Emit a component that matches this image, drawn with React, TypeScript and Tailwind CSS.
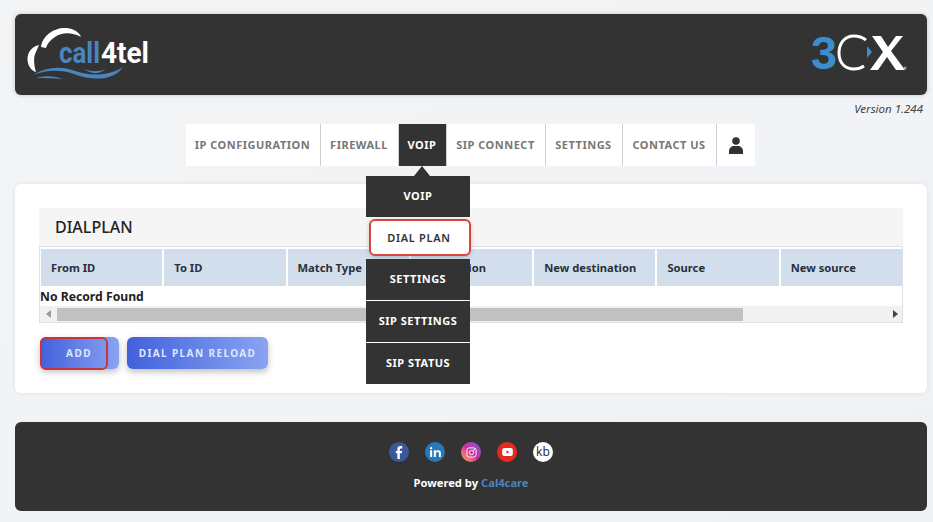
const font = { fontFamily: '"Noto Sans", "Open Sans", sans-serif' }

const navItems = [
  { label: "IP CONFIGURATION", width: "w-[135px]" },
  { label: "FIREWALL", width: "w-[78px]" },
  { label: "VOIP", width: "w-[48px]", active: true },
  { label: "SIP CONNECT", width: "w-[99px]" },
  { label: "SETTINGS", width: "w-[77px]" },
  { label: "CONTACT US", width: "w-[94px]" },
]

const columns = ["From ID", "To ID", "Match Type", "Destination", "New destination", "Source", "New source"]

function Call4telLogo() {
  return (
    <svg width="126" height="56" viewBox="0 0 126 56" fill="none">
      {/* cloud */}
      <path d="M15 20C17 6 34 -3 48 3C52 5 54 7 55 10C46 5 36 5 29 10C24 13 21 17 20 21Z" fill="#fff" />
      <path d="M13 18C4 20 0 28 2 36C3 40 6 44 10 45C8 38 7 30 10 25C11 23 12 20 13 18Z" fill="#fff" />
      {/* waves */}
      <path d="M7 48C20 40 33 39 46 43C60 48 80 51 97 40C88 54 66 54 48 47C34 42 20 43 7 48Z" fill="#4a86bd" />
      <path d="M58 42C66 45 72 45 80 42C72 48 65 47 58 42Z" fill="#4a86bd" />
      <path d="M10 51C20 48 30 49 37 52C28 51 20 51 10 51Z" fill="#4a86bd" />
      <text x="33" y="36" fontFamily="Roboto, sans-serif" fontWeight="700" fontSize="29" fill="#4a86bd" textLength="41" lengthAdjust="spacingAndGlyphs">call</text>
      <text x="75" y="36" fontFamily="Roboto, sans-serif" fontWeight="700" fontSize="29" fill="#fff" textLength="48" lengthAdjust="spacingAndGlyphs">4tel</text>
    </svg>
  )
}

function ThreeCxLogo() {
  return (
    <svg className="mb-1" width="98" height="56" viewBox="0 -10 98 56" fill="none">
      <text x="0" y="34" fontFamily="Liberation Sans, sans-serif" fontWeight="700" fontSize="47" fill="#3b8fd0" textLength="26" lengthAdjust="spacingAndGlyphs">3</text>
      <path d="M55 5C51 2 47 1 43 1C33 1 28 9 28 18C28 28 34 34 43 34C47 34 50 33 53 31" stroke="#fff" strokeWidth="3" />
      <path d="M56 11L61 17L56 23Z" fill="#3b8fd0" />
      <path d="M61 1H70L77 12L85 1H92L80 16L94 35H85L76 22L67 35H59L72 17Z" fill="#fff" />
      <circle cx="94" cy="33" r="1.500" fill="#9aa5ad" />
    </svg>
  )
}

function SocialIcons() {
  return (
    <div className="flex items-center gap-4">
      <div className="flex h-5 w-5 items-center justify-center rounded-full bg-[#3b5998]">
        <svg width="8" height="15" viewBox="0 0 10 16"><path d="M3 16V9H1V6h2V4c0-2.500 1.500-4 3.500-4H9v3H7.500C6.500 3 6 3.500 6 4.500V6h3L8.500 9H6v7Z" fill="#fff" /></svg>
      </div>
      <div className="flex h-5 w-5 items-center justify-center rounded-full bg-[#2a78b8]">
        <svg width="11" height="10" viewBox="0 0 13 12"><path d="M0 4h2.500v8H0ZM1.250 0a1.400 1.400 0 1 1 0 2.800 1.400 1.400 0 0 1 0-2.800ZM4.500 4H7v1.200C7.500 4.400 8.500 3.800 9.700 3.800 12 3.800 13 5.200 13 7.500V12h-2.500V8c0-1.200-.4-2-1.500-2S7 6.800 7 8v4H4.500Z" fill="#fff" /></svg>
      </div>
      <div className="flex h-5 w-5 items-center justify-center rounded-full bg-gradient-to-tr from-[#f9a825] via-[#d6249f] to-[#5b51d8]">
        <svg width="11" height="11" viewBox="0 0 12 12" fill="none" stroke="#fff"><rect x="1" y="1" width="10" height="10" rx="2.500" /><circle cx="6" cy="6" r="2.300" /><circle cx="8.800" cy="3.200" r=".4" fill="#fff" /></svg>
      </div>
      <div className="flex h-5 w-5 items-center justify-center rounded-full bg-[#e62b1e]">
        <svg width="11" height="8" viewBox="0 0 12 9"><rect width="12" height="9" rx="2.500" fill="#fff" /><path d="M4.800 2.500 8 4.500 4.800 6.500Z" fill="#e62b1e" /></svg>
      </div>
      <div className="flex h-5 w-5 items-center justify-center rounded-full bg-white text-[12px] leading-none text-[#333]">kb</div>
    </div>
  )
}

function DropdownItem({ label }: { label: string }) {
  return (
    <div className="flex h-[41px] w-[104px] items-center justify-center bg-[#333333] text-[11px] font-bold tracking-[0.5px] text-white">
      {label}
    </div>
  )
}

export default function App() {
  return (
    <div className="h-[522px] w-[933px] overflow-hidden bg-gradient-to-br from-[#f3f4f5] to-[#eff2f5] pl-[15px] pr-[6px] pt-[14px]" style={font}>
      <header className="flex h-[81px] items-center justify-between rounded-md bg-[#333333] pl-[11px] pr-[18px] shadow-[0_0_4px_rgba(0,0,0,0.2)]">
        <Call4telLogo />
        <ThreeCxLogo />
      </header>

      <p className="mt-[6px] h-[16px] pr-1 text-right text-[11.5px] italic leading-4 text-[#444]">Version 1.244</p>

      <nav className="relative z-10 mt-[7px] flex h-[42px] justify-center pr-[2px]">
        <div className="flex">
          {navItems.map((item) => (
            <div
              key={item.label}
              className={`relative flex h-[42px] items-center justify-center border-r border-[#cfcfcf] text-[11px] font-bold tracking-[0.5px] ${item.width} ${item.active ? "bg-[#333333] text-white" : "bg-white text-[#777]"}`}
            >
              {item.label}
              {item.active && (
                <span className="absolute -bottom-[10px] left-1/2 h-0 w-0 -translate-x-1/2 border-x-[8px] border-b-[10px] border-x-transparent border-b-[#333333]" />
              )}
            </div>
          ))}
          <div className="flex h-[42px] w-[38px] items-center justify-center bg-white">
            <svg width="14" height="17" viewBox="0 0 14 17" fill="#333"><circle cx="7" cy="4" r="3.800" /><path d="M0 17v-3c0-3 2.500-5 5-5h4c2.500 0 5 2 5 5v3Z" /></svg>
          </div>
        </div>

        {/* dropdown */}
        <div className="absolute left-[351px] top-[52px] flex flex-col">
          <DropdownItem label="VOIP" />
          <div className="relative my-[1px] h-[40px] w-[104px]">
            <div className="absolute left-[3px] top-[1px] flex h-[37px] w-[102px] items-center justify-center rounded-md border-2 border-[#d9453d] bg-white pr-[2px] pt-px text-[11px] font-semibold tracking-[0.7px] text-[#333] shadow-[0_1px_4px_rgba(0,0,0,0.2)]">
              DIAL PLAN
            </div>
          </div>
          <div className="flex flex-col gap-px">
            <DropdownItem label="SETTINGS" />
            <DropdownItem label="SIP SETTINGS" />
            <DropdownItem label="SIP STATUS" />
          </div>
        </div>
      </nav>

      <main className="mt-[18px] h-[209px] rounded-md bg-white px-6 pt-6 shadow-[0_0_4px_rgba(0,0,0,0.08)]">
        <h2 className="flex h-[38px] items-center bg-[#f5f5f5] pl-4 text-[16px] font-medium text-[#222]">DIALPLAN</h2>
        <div className="border border-[#dde1e5] pt-[2px]">
          <div className="flex gap-[2px] pl-px">
            {columns.map((col) => (
              <div key={col} className="flex h-[37px] flex-1 items-center bg-[#d2deec] pl-[10px] pt-px text-[11.2px] font-bold text-[#2a2f3a]">
                {col}
              </div>
            ))}
          </div>
          <div className="flex h-[20px] items-center pt-[2px] text-[12.2px] font-bold text-[#222]">No Record Found</div>
          <div className="flex h-[16px] items-center bg-[#f1f1f1] pr-1">
            <span className="ml-[6px] mr-[6px] h-0 w-0 shrink-0 border-y-[4px] border-r-[5px] border-y-transparent border-r-[#999]" />
            <div className="h-[13px] w-[686px] bg-[#c1c1c1]" />
            <div className="flex-1" />
            <span className="h-0 w-0 border-y-[4px] border-l-[5px] border-y-transparent border-l-[#444]" />
          </div>
        </div>

        <div className="relative mt-[14px] flex gap-2 pl-px">
          <button className="h-[32px] w-[79px] rounded-md bg-gradient-to-r from-[#4360db] to-[#8aa3f1] text-[10px] font-bold tracking-[1.4px] text-[#dfe7ff] shadow-[0_3px_6px_rgba(0,0,0,0.25)]">
            <span className="block w-[78px]">ADD</span>
          </button>
          <button className="h-[32px] w-[141px] rounded-md bg-gradient-to-r from-[#4360db] to-[#8aa3f1] text-[10px] font-bold tracking-[1.4px] text-[#dfe7ff] shadow-[0_3px_6px_rgba(0,0,0,0.25)]">
            DIAL PLAN RELOAD
          </button>
          <span className="absolute left-px top-0 h-[33px] w-[68px] rounded-md border-2 border-[#c9343f]" />
        </div>
      </main>

      <footer className="mt-[29px] flex h-[89px] flex-col items-center rounded-md bg-[#333333] pt-5">
        <SocialIcons />
        <p className="mt-[13px] text-[11.2px] font-bold text-white">
          Powered by <span className="text-[#4a86bd]">Cal4care</span>
        </p>
      </footer>
    </div>
  )
}
